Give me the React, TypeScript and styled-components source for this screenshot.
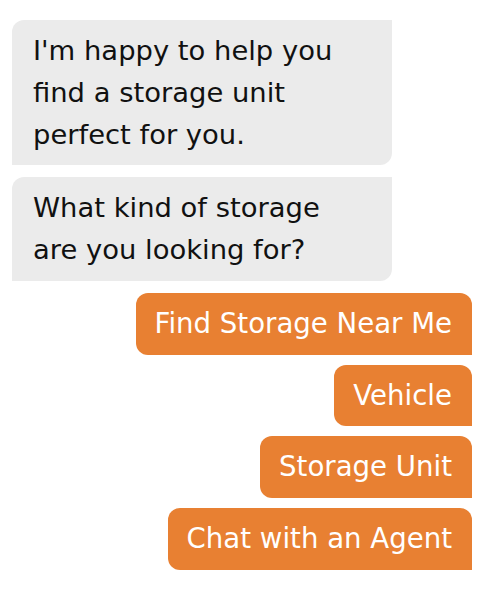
import React from "react";
import styled, { createGlobalStyle } from "styled-components";

const GlobalStyle = createGlobalStyle`
  html, body {
    margin: 0;
    padding: 0;
    background: #ffffff;
  }
  body {
    font-family: "DejaVu Sans", "Noto Sans", sans-serif;
  }
`;

const Chat = styled.div`
  display: flex;
  flex-direction: column;
  padding: 20px 10px 0 12px;
  width: 482px;
  box-sizing: border-box;
`;

const BotGroup = styled.div`
  display: flex;
  flex-direction: column;
  gap: 12px;
`;

const Bubble = styled.div`
  width: 380px;
  box-sizing: border-box;
  background: #ebebeb;
  color: #111111;
  font-size: 27.4px;
  line-height: 41.8px;
  padding: 10px 21px;
  border-radius: 12px 0 12px 0;
`;

const Options = styled.div`
  display: flex;
  flex-direction: column;
  align-items: flex-end;
  gap: 10px;
  margin-top: 12px;
`;

const OptionButton = styled.button`
  background: #e88032;
  color: #ffffff;
  border: none;
  font-family: "DejaVu Sans", "Noto Sans", sans-serif;
  font-size: 27.6px;
  line-height: 41.7px;
  padding: 10px 20px 10px 19px;
  border-radius: 12px 12px 0 12px;
  cursor: pointer;
`;

const options = ["Find Storage Near Me", "Vehicle", "Storage Unit", "Chat with an Agent"];

export default function App() {
  return (
    <>
      <GlobalStyle />
      <Chat>
        <BotGroup>
          <Bubble>
            I'm happy to help you
            <br />
            find a storage unit
            <br />
            perfect for you.
          </Bubble>
          <Bubble>
            What kind of storage
            <br />
            are you looking for?
          </Bubble>
        </BotGroup>
        <Options>
          {options.map((o) => (
            <OptionButton key={o}>{o}</OptionButton>
          ))}
        </Options>
      </Chat>
    </>
  );
}
